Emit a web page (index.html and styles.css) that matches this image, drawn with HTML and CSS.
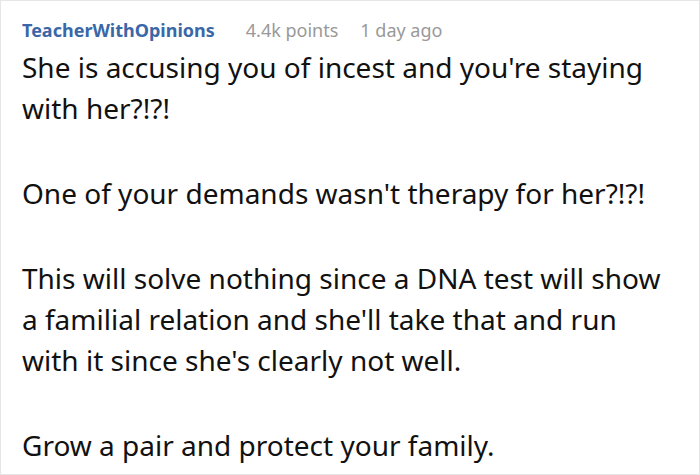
FILE: index.html
```html
<!DOCTYPE html>
<html>
<head>
<meta charset="utf-8">
<link rel="stylesheet" href="styles.css">
</head>
<body>
<div class="comment">
  <div class="meta">
    <span class="author">TeacherWithOpinions</span>
    <span class="points">4.4k points</span>
    <span class="time">1 day ago</span>
  </div>
  <div class="body">
    <p>She is accusing you of incest and you're staying with her?!?!</p>
    <p>One of your demands wasn't therapy for her?!?!</p>
    <p>This will solve nothing since a DNA test will show a familial relation and she'll take that and run with it since she's clearly not well.</p>
    <p>Grow a pair and protect your family.</p>
  </div>
</div>
</body>
</html>
```
FILE: styles.css
```css
html, body {
  margin: 0;
  padding: 0;
  background: #fff;
}
.comment {
  box-sizing: border-box;
  width: 700px;
  height: 475px;
  border: 1px solid #e6e6e6;
  padding: 16px 20px 0 21px;
  font-family: "Noto Sans", sans-serif;
  overflow: hidden;
}
.meta {
  display: flex;
  gap: 22px;
  font-size: 18px;
  line-height: 26px;
  color: #999;
}
.author {
  color: #3a67a8;
  font-weight: 700;
  margin-right: 9px;
}
.body {
  font-size: 28px;
  line-height: 41px;
  color: #111;
  margin-top: 4px;
}
.body p {
  margin: 0 0 44px 0;
}
```
